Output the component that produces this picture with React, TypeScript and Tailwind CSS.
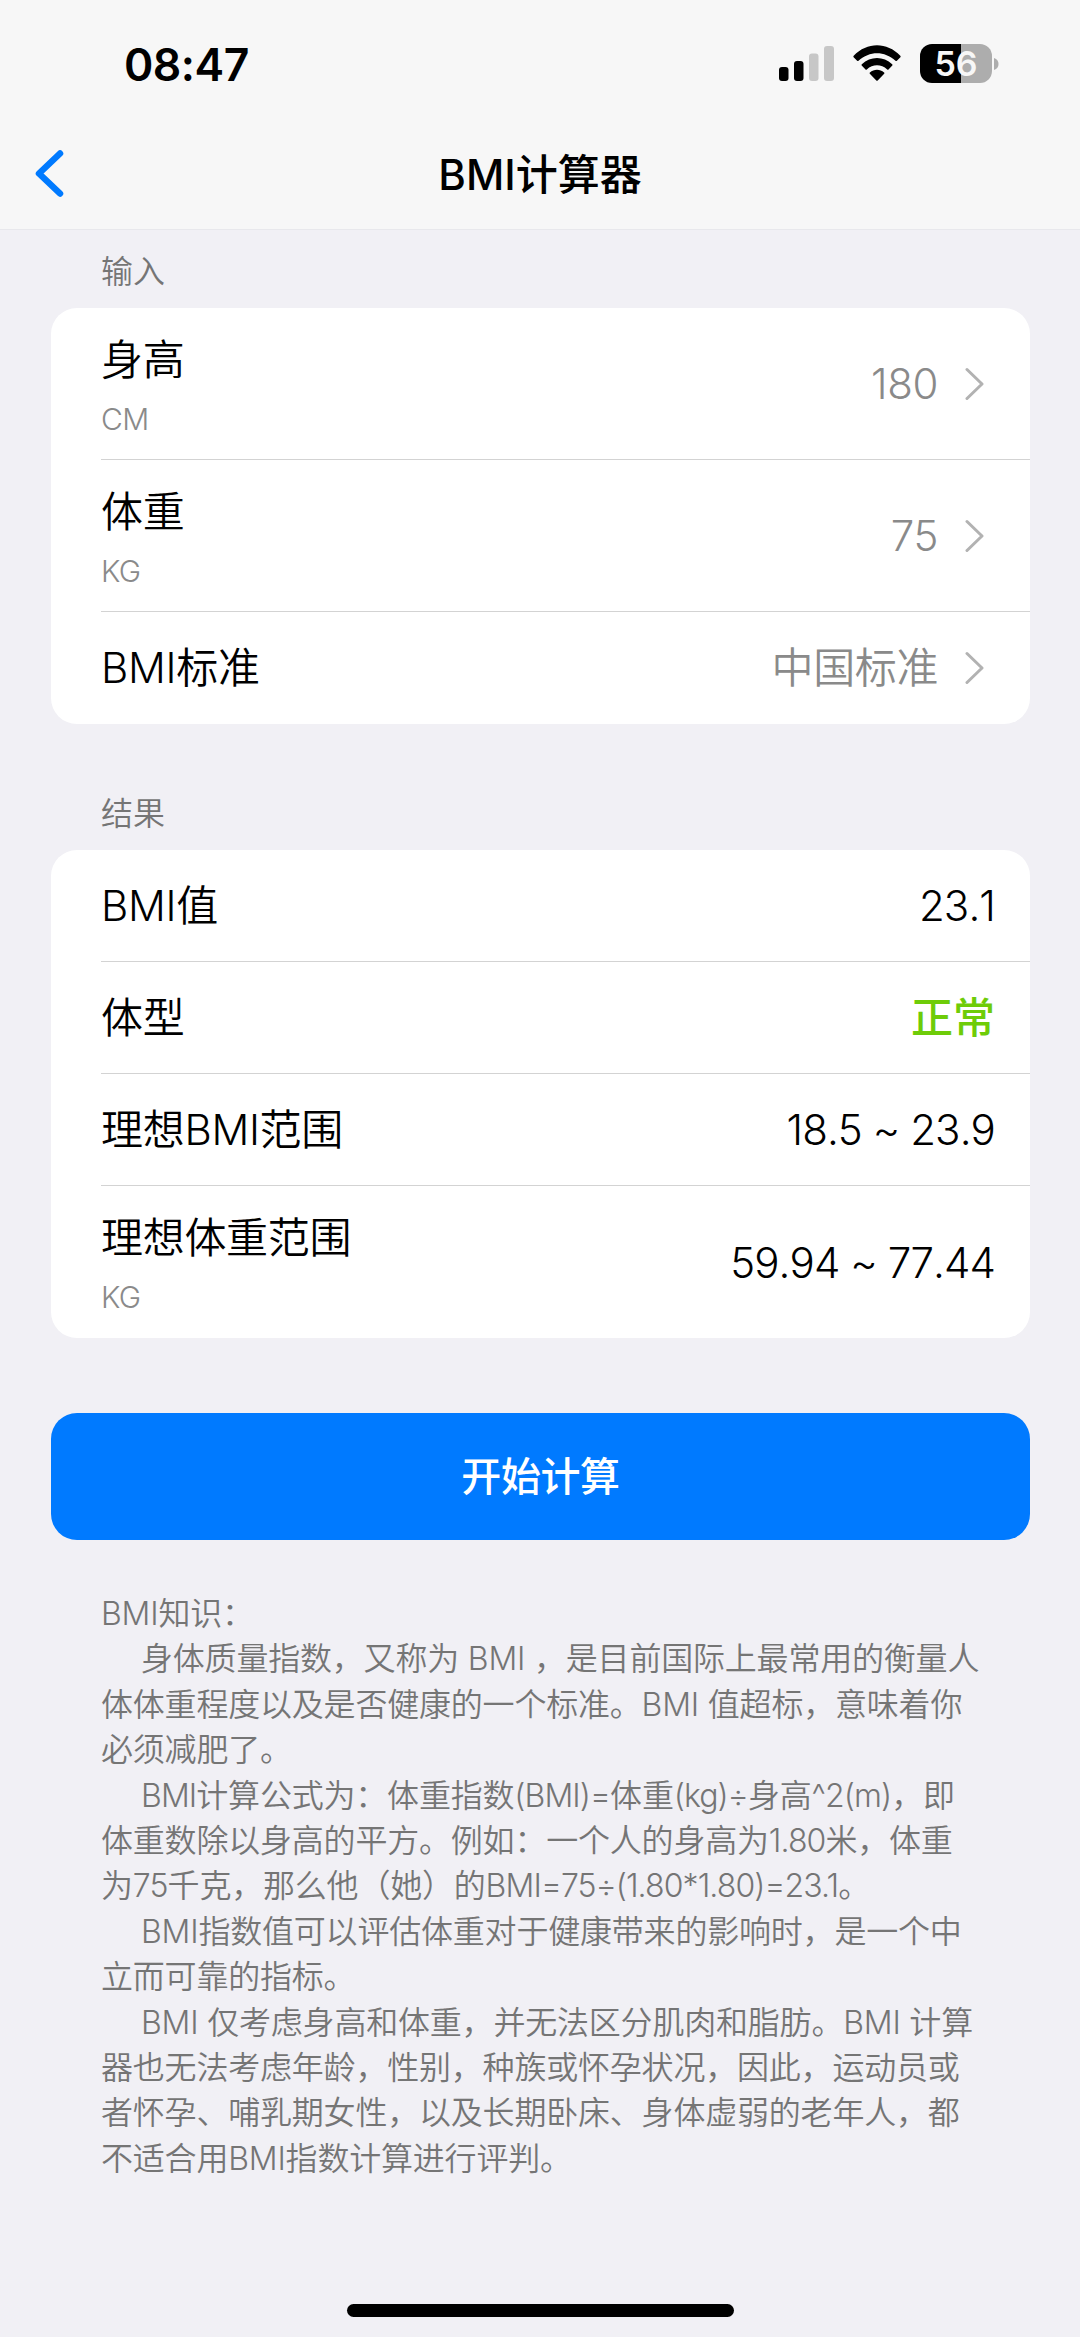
import type { ReactNode } from "react";

interface RowProps {
  label: string;
  unit?: string;
  last?: boolean;
  children: ReactNode;
}

interface Line {
  text: string;
  indent?: boolean;
  formula?: boolean;
}

const knowledge: Line[] = [
  { text: "BMI知识：" },
  { text: "身体质量指数，又称为 BMI ，是目前国际上最常用的衡量人", indent: true },
  { text: "体体重程度以及是否健康的一个标准。BMI 值超标，意味着你" },
  { text: "必须减肥了。" },
  {
    text: "BMI计算公式为：体重指数(BMI)=体重(kg)÷身高^2(m)，即",
    indent: true,
    formula: true,
  },
  { text: "体重数除以身高的平方。例如：一个人的身高为1.80米，体重", formula: true },
  { text: "为75千克，那么他（她）的BMI=75÷(1.80*1.80)=23.1。", formula: true },
  { text: "BMI指数值可以评估体重对于健康带来的影响时，是一个中", indent: true },
  { text: "立而可靠的指标。" },
  { text: "BMI 仅考虑身高和体重，并无法区分肌肉和脂肪。BMI 计算", indent: true },
  { text: "器也无法考虑年龄，性别，种族或怀孕状况，因此，运动员或" },
  { text: "者怀孕、哺乳期女性，以及长期卧床、身体虚弱的老年人，都" },
  { text: "不适合用BMI指数计算进行评判。" },
];

function StatusBar() {
  return (
    <div className="flex h-[120px] items-start justify-between pt-[44px] pr-[81px] pl-[124px]">
      <span className="text-[44.5px] leading-[42px] font-semibold tracking-[-0.5px]">
        08:47
      </span>
      <div className="flex items-start">
        <svg width="56" height="38" viewBox="0 0 56 38" className="mr-[18px]">
          <rect x="0" y="23" width="9.5" height="14" rx="3" fill="#000" />
          <rect x="15" y="17" width="9.5" height="20" rx="3" fill="#000" />
          <rect x="30" y="9.5" width="9.5" height="27.5" rx="3" fill="#c7c7c7" />
          <rect x="45" y="2" width="10" height="35" rx="3" fill="#c7c7c7" />
        </svg>
        <svg width="48" height="38" viewBox="0 0 48 38" className="mr-[19px]">
          <path
            d="M0.6 13.200 Q0 12.500 0.7 11.800 C14 -2.200 34 -2.200 47.300 11.800 Q48 12.500 47.400 13.200 L43.900 16.800 Q43.200 17.400 42.500 16.800 C31.500 6.600 16.500 6.600 5.500 16.800 Q4.800 17.400 4.100 16.800 Z"
            fill="#000"
          />
          <path
            d="M8.700 21.600 Q8.100 20.900 8.800 20.300 C17.500 11.900 30.500 11.900 39.200 20.300 Q39.900 20.900 39.300 21.600 L35.500 25.400 Q34.900 26 34.200 25.500 C28.200 19.900 19.800 19.900 13.800 25.500 Q13.100 26 12.500 25.400 Z"
            fill="#000"
          />
          <path
            d="M16.800 29.800 Q16.200 29.200 16.900 28.600 C21 24.900 27 24.900 31.100 28.600 Q31.800 29.200 31.200 29.800 L24.700 36.400 Q24 37.100 23.300 36.400 Z"
            fill="#000"
          />
        </svg>
        <div className="flex items-center">
          <div className="flex h-[39px] w-[72px] items-center justify-center rounded-[12px] bg-[linear-gradient(to_right,#000_41px,#adadad_41px)] text-[34px] leading-none font-semibold text-[#f7f7f7]">
            56
          </div>
          <svg width="5" height="12" viewBox="0 0 5 12" className="ml-[2px]">
            <path d="M0 0 Q4.500 1.500 4.500 6 Q4.500 10.500 0 12 Z" fill="#adadad" />
          </svg>
        </div>
      </div>
    </div>
  );
}

function NavBar() {
  return (
    <div className="grid h-[109px] grid-cols-[200px_1fr_200px] items-start">
      <button className="pt-[29px] pl-[34px]">
        <svg width="30" height="50" viewBox="0 0 30 50" fill="none">
          <path
            d="M26 4.500 L5 24.500 L26 44.500"
            stroke="#007aff"
            strokeWidth="6.500"
            strokeLinecap="round"
            strokeLinejoin="round"
          />
        </svg>
      </button>
      <h1 className="pt-[25px] text-center text-[42px] leading-[60px] font-medium">
        BMI计算器
      </h1>
    </div>
  );
}

function Chevron() {
  return (
    <svg width="20" height="34" viewBox="0 0 20 34" fill="none">
      <path
        d="M2 2.500 L17 17 L2 31.500"
        stroke="#b2b2b2"
        strokeWidth="3"
        strokeLinecap="round"
        strokeLinejoin="round"
      />
    </svg>
  );
}

function Row({ label, unit, last, children }: RowProps) {
  return (
    <div
      className={`flex items-center justify-between pr-[35px] ${
        unit ? "h-[152px]" : "h-[112px]"
      } ${last ? "" : "border-b border-[#d3d3d3]"}`}
    >
      <div>
        <div className="text-[42px] leading-[60px] tracking-[-0.3px]">{label}</div>
        {unit && (
          <div className="mt-[5px] mb-[-5px] text-[30px] leading-[48px] tracking-[-0.6px] text-[#8a8a8a]">
            {unit}
          </div>
        )}
      </div>
      {children}
    </div>
  );
}

function Picker({ value }: { value: string }) {
  return (
    <div className="flex items-center gap-[27px] pr-[10px] text-[42px] leading-[60px] tracking-[-0.4px] text-[#8a8a8a]">
      <span>{value}</span>
      <Chevron />
    </div>
  );
}

function Value({ children }: { children: ReactNode }) {
  return (
    <span className="text-[42px] tracking-[-0.9px] [font-kerning:none]">{children}</span>
  );
}

function Section({ title, children }: { title: string; children: ReactNode }) {
  return (
    <section>
      <h2 className="pl-[50px] text-[32px] leading-[48px] text-[#757575]">{title}</h2>
      <div className="mt-[12px] rounded-[26px] bg-white pl-[50px]">{children}</div>
    </section>
  );
}

// Formulas are set a little tighter than the surrounding prose.
function KnowledgeLine({ text, indent, formula }: Line) {
  return (
    <p className={indent ? "pl-[40px]" : ""}>
      {formula
        ? text.split(/([!-~÷]+)/).map((part, idx) => (
            <span key={idx} className={idx % 2 ? "tracking-[-0.9px]" : ""}>
              {part}
            </span>
          ))
        : text}
    </p>
  );
}

export default function App() {
  return (
    <div className="flex h-[2337px] w-[1080px] flex-col overflow-hidden bg-[#f1f0f5] font-[Inter,'Noto_Sans_CJK_SC',sans-serif] font-[350] text-black">
      <header className="border-b border-[#e8e8ec] bg-[#f7f7f7]">
        <StatusBar />
        <NavBar />
      </header>

      <main className="flex flex-1 flex-col pt-[18px] pr-[50px] pl-[51px]">
        <Section title="输入">
          <Row label="身高" unit="CM">
            <Picker value="180" />
          </Row>
          <Row label="体重" unit="KG">
            <Picker value="75" />
          </Row>
          <Row label="BMI标准" last>
            <Picker value="中国标准" />
          </Row>
        </Section>

        <div className="mt-[66px]">
          <Section title="结果">
            <Row label="BMI值">
              <Value>23.1</Value>
            </Row>
            <Row label="体型">
              <span className="text-[42px] font-medium text-[#6ecc08]">正常</span>
            </Row>
            <Row label="理想BMI范围">
              <Value>18.5 ~ 23.9</Value>
            </Row>
            <Row label="理想体重范围" unit="KG" last>
              <Value>59.94 ~ 77.44</Value>
            </Row>
          </Section>
        </div>

        <button className="mt-[75px] h-[127px] rounded-[26px] bg-[#007aff] text-[40px] font-medium tracking-[-0.4px] text-white">
          开始计算
        </button>

        <div className="mt-[51px] pl-[50px] text-[32px] leading-[45.4px] tracking-[-0.2px] whitespace-pre text-[#757575]">
          {knowledge.map((line) => (
            <KnowledgeLine key={line.text} {...line} />
          ))}
        </div>
      </main>

      <footer className="flex justify-center pb-[20px]">
        <div className="h-[13px] w-[387px] rounded-full bg-black" />
      </footer>
    </div>
  );
}
